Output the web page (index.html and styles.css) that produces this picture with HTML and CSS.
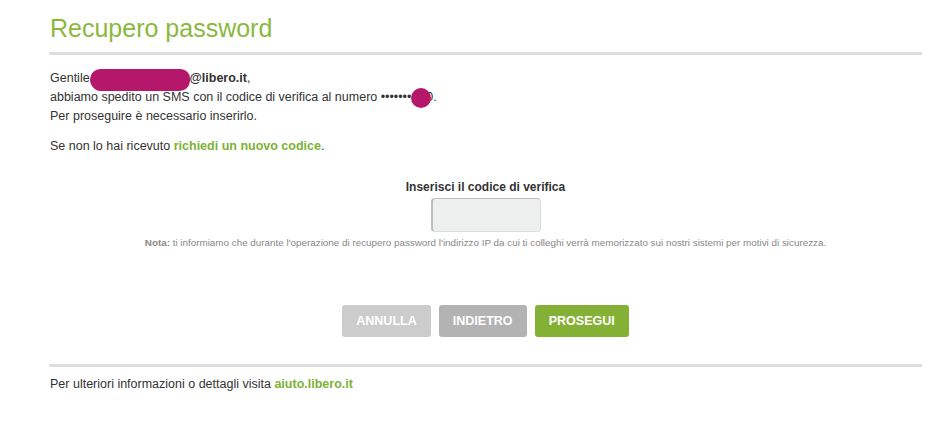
FILE: index.html
```html
<!DOCTYPE html>
<html lang="it">
    <head>
        <meta charset="UTF-8" />
        <meta name="viewport" content="width=device-width, initial-scale=1.0" />
        <title>Recupero password</title>
        <link rel="stylesheet" href="styles.css">
    </head>
    <body>
        <div class="page">
            <header class="head">
                <h1>Recupero password</h1>
            </header>

            <section class="msg">
                <p>
                    Gentile<span class="redact redact-name"></span><b>@libero.it</b>,<br />
                    abbiamo spedito un SMS con il codice di verifica al numero
                    •••••••<span class="redact redact-dot"></span>0.<br />
                    Per proseguire è necessario inserirlo.
                </p>
                <p>Se non lo hai ricevuto <a href="#">richiedi un nuovo codice</a>.</p>
            </section>

            <form class="verify">
                <label for="code">Inserisci il codice di verifica</label>
                <input id="code" name="code" type="text" />
                <p class="note">
                    <b>Nota:</b> ti informiamo che durante l'operazione di recupero password
                    l'indirizzo IP da cui ti colleghi verrà memorizzato sui nostri sistemi per
                    motivi di sicurezza.
                </p>
                <div class="actions">
                    <button type="button" class="btn btn-cancel">ANNULLA</button>
                    <button type="button" class="btn btn-back">INDIETRO</button>
                    <button type="submit" class="btn btn-next">PROSEGUI</button>
                </div>
            </form>

            <footer class="foot">
                Per ulteriori informazioni o dettagli visita <a href="#">aiuto.libero.it</a>
            </footer>
        </div>
    </body>
</html>
```

FILE: styles.css
```css
body {
    margin: 0;
    font-family: "Liberation Sans", Arial, sans-serif;
    font-size: 12.5px;
    color: #333;
    background: #fff;
}
.page {
    width: 873px;
    margin-left: 49px;
}
a {
    color: #7cb236;
    font-weight: bold;
    text-decoration: none;
}

/* header */
.head {
    padding: 13px 0 9px 1px;
    border-bottom: 3px solid #dedede;
}
h1 {
    margin: 0;
    font-size: 25px;
    font-weight: normal;
    line-height: 30px;
    color: #8ab83f;
}

/* message */
.msg {
    padding: 14px 0 0 1px;
}
.msg p {
    margin: 0 0 11px;
    line-height: 19px;
}
.msg p:last-child {
    margin-bottom: 0;
}
.redact {
    display: inline-block;
    position: relative;
    background: #b5176b;
}
.redact-name {
    width: 100px;
    height: 22px;
    margin: -3px 0;
    border-radius: 11px 10px 11px 12px;
    vertical-align: -6px;
}
.redact-dot {
    width: 20px;
    height: 20px;
    margin: -3px -5px -3px 0;
    border-radius: 50%;
    vertical-align: -4px;
}

/* code form */
.verify {
    margin-top: 23px;
    display: flex;
    flex-direction: column;
    align-items: center;
}
.verify label {
    font-size: 12px;
    font-weight: bold;
    line-height: 17px;
}
.verify input {
    box-sizing: border-box;
    width: 110px;
    height: 34px;
    margin-top: 2px;
    border: 1px solid #dcdcdc;
    border-top-color: #bdbdbd;
    border-left: 2px solid #bdbdbd;
    border-radius: 4px;
    background: #eef0f0;
}
.note {
    margin: 4px 0 0;
    font-size: 9.85px;
    line-height: 13px;
    color: #888;
}
.actions {
    display: flex;
    gap: 8px;
    margin-top: 56px;
}
.btn {
    height: 32px;
    min-width: 88px;
    padding: 0 14px;
    border: 0;
    border-radius: 3px;
    font-family: inherit;
    font-size: 12.5px;
    font-weight: bold;
    color: #fff;
}
.btn-cancel {
    background: #cccccc;
}
.btn-back {
    background: #b3b3b3;
}
.btn-next {
    background: #84b135;
}

/* footer */
.foot {
    margin-top: 27px;
    padding: 8px 0 0 1px;
    border-top: 3px solid #dedede;
    line-height: 19px;
}
```
